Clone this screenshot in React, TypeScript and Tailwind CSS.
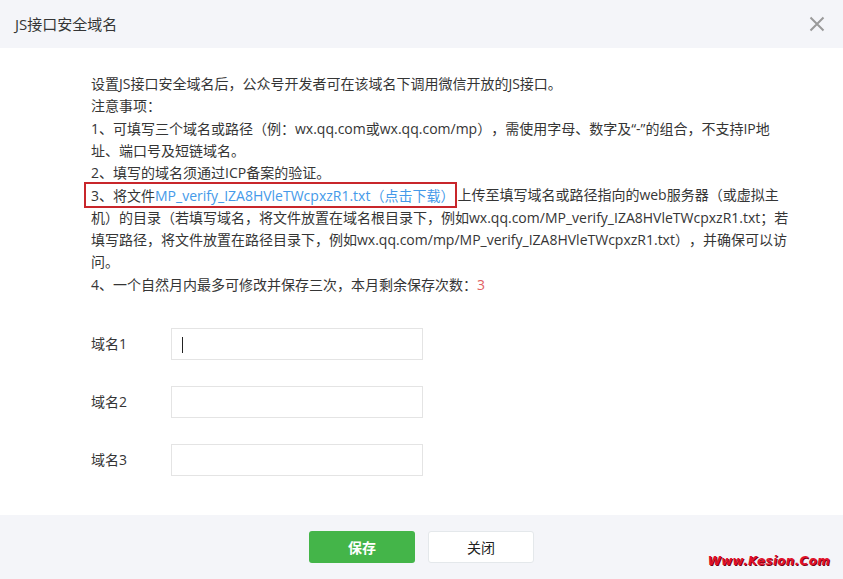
import React from "react";

const font = { fontFamily: '"Open Sans", "Noto Sans CJK SC", sans-serif' };

function CloseIcon() {
  return (
    <svg width="16" height="16" viewBox="0 0 16 16" className="text-[#9a9a9a]">
      <path d="M1.5 1.5L14.5 14.5M14.5 1.5L1.5 14.5" stroke="currentColor" strokeWidth="2" />
    </svg>
  );
}

function Field({ label, focused }: { label: string; focused?: boolean }) {
  return (
    <div className="flex items-center">
      <label className="w-[80px] text-[14px] text-[#353535]">{label}</label>
      <div className="relative w-[252px] h-[32px] border border-[#e4e4e4] bg-white">
        <input className="w-full h-full px-[10px] text-[14px] outline-none bg-transparent" />
        {focused && <span className="absolute left-[10px] top-[8px] w-px h-[16px] bg-[#222]" />}
      </div>
    </div>
  );
}

export default function App() {
  const file = "MP_verify_IZA8HVleTWcpxzR1.txt";
  return (
    <div className="relative w-[843px] h-[579px] bg-white overflow-hidden [text-spacing-trim:space-all]" style={font}>
      {/* header */}
      <div className="h-[48px] bg-[#f4f5f9] flex items-center justify-between pl-[15px] pr-[18px]">
        <h3 className="text-[15px] text-[#353535]">JS接口安全域名</h3>
        <CloseIcon />
      </div>

      {/* notes */}
      <div className="pt-[25px] pl-[91px] pr-[30px] text-[14px] leading-[22.3px] text-[#353535] whitespace-nowrap">
        <p>设置JS接口安全域名后，公众号开发者可在该域名下调用微信开放的JS接口。</p>
        <p>注意事项：</p>
        <p>
          1、可填写三个域名或路径（例：wx.qq.com或wx.qq.com/mp），需使用字母、数字及“-”的组合，不支持IP地
          <br />
          址、端口号及短链域名。
        </p>
        <p>2、填写的域名须通过ICP备案的验证。</p>
        <p>
          <span className="-ml-[7px] pl-[5px] pr-[1px] py-[1.5px] border-2 border-[#c8262b]">
            3、将文件<a className="text-[#459ae9]">{file}（点击下载）</a>
          </span>
          上传至填写域名或路径指向的web服务器（或虚拟主
          <br />
          机）的目录（若填写域名，将文件放置在域名根目录下，例如wx.qq.com/{file}；若
          <br />
          填写路径，将文件放置在路径目录下，例如wx.qq.com/mp/{file}），并确保可以访
          <br />
          问。
        </p>
        <p>
          4、一个自然月内最多可修改并保存三次，本月剩余保存次数：<span className="text-[#e15f63]">3</span>
        </p>
      </div>

      {/* form */}
      <div className="mt-[32px] pl-[91px] flex flex-col gap-[26px]">
        <Field label="域名1" focused />
        <Field label="域名2" />
        <Field label="域名3" />
      </div>

      {/* footer */}
      <div className="absolute left-0 right-0 bottom-0 h-[64px] bg-[#f4f5f9] flex items-center justify-center gap-[13px]">
        <button className="w-[106px] h-[32px] rounded-[3px] bg-[#44b549] text-white text-[14px] font-bold">保存</button>
        <button className="w-[106px] h-[32px] rounded-[3px] bg-white border border-[#e4e8eb] text-[#222] text-[14px]">关闭</button>
      </div>

      {/* watermark */}
      <div
        className="absolute right-[13px] bottom-[9px] text-[12px] font-bold italic text-[#e0102a] tracking-[0.3px]"
        style={{ fontFamily: '"DejaVu Sans", sans-serif', textShadow: "1px 1px 0 #7a0010" }}
      >
        Www.Kesion.Com
      </div>
    </div>
  );
}
